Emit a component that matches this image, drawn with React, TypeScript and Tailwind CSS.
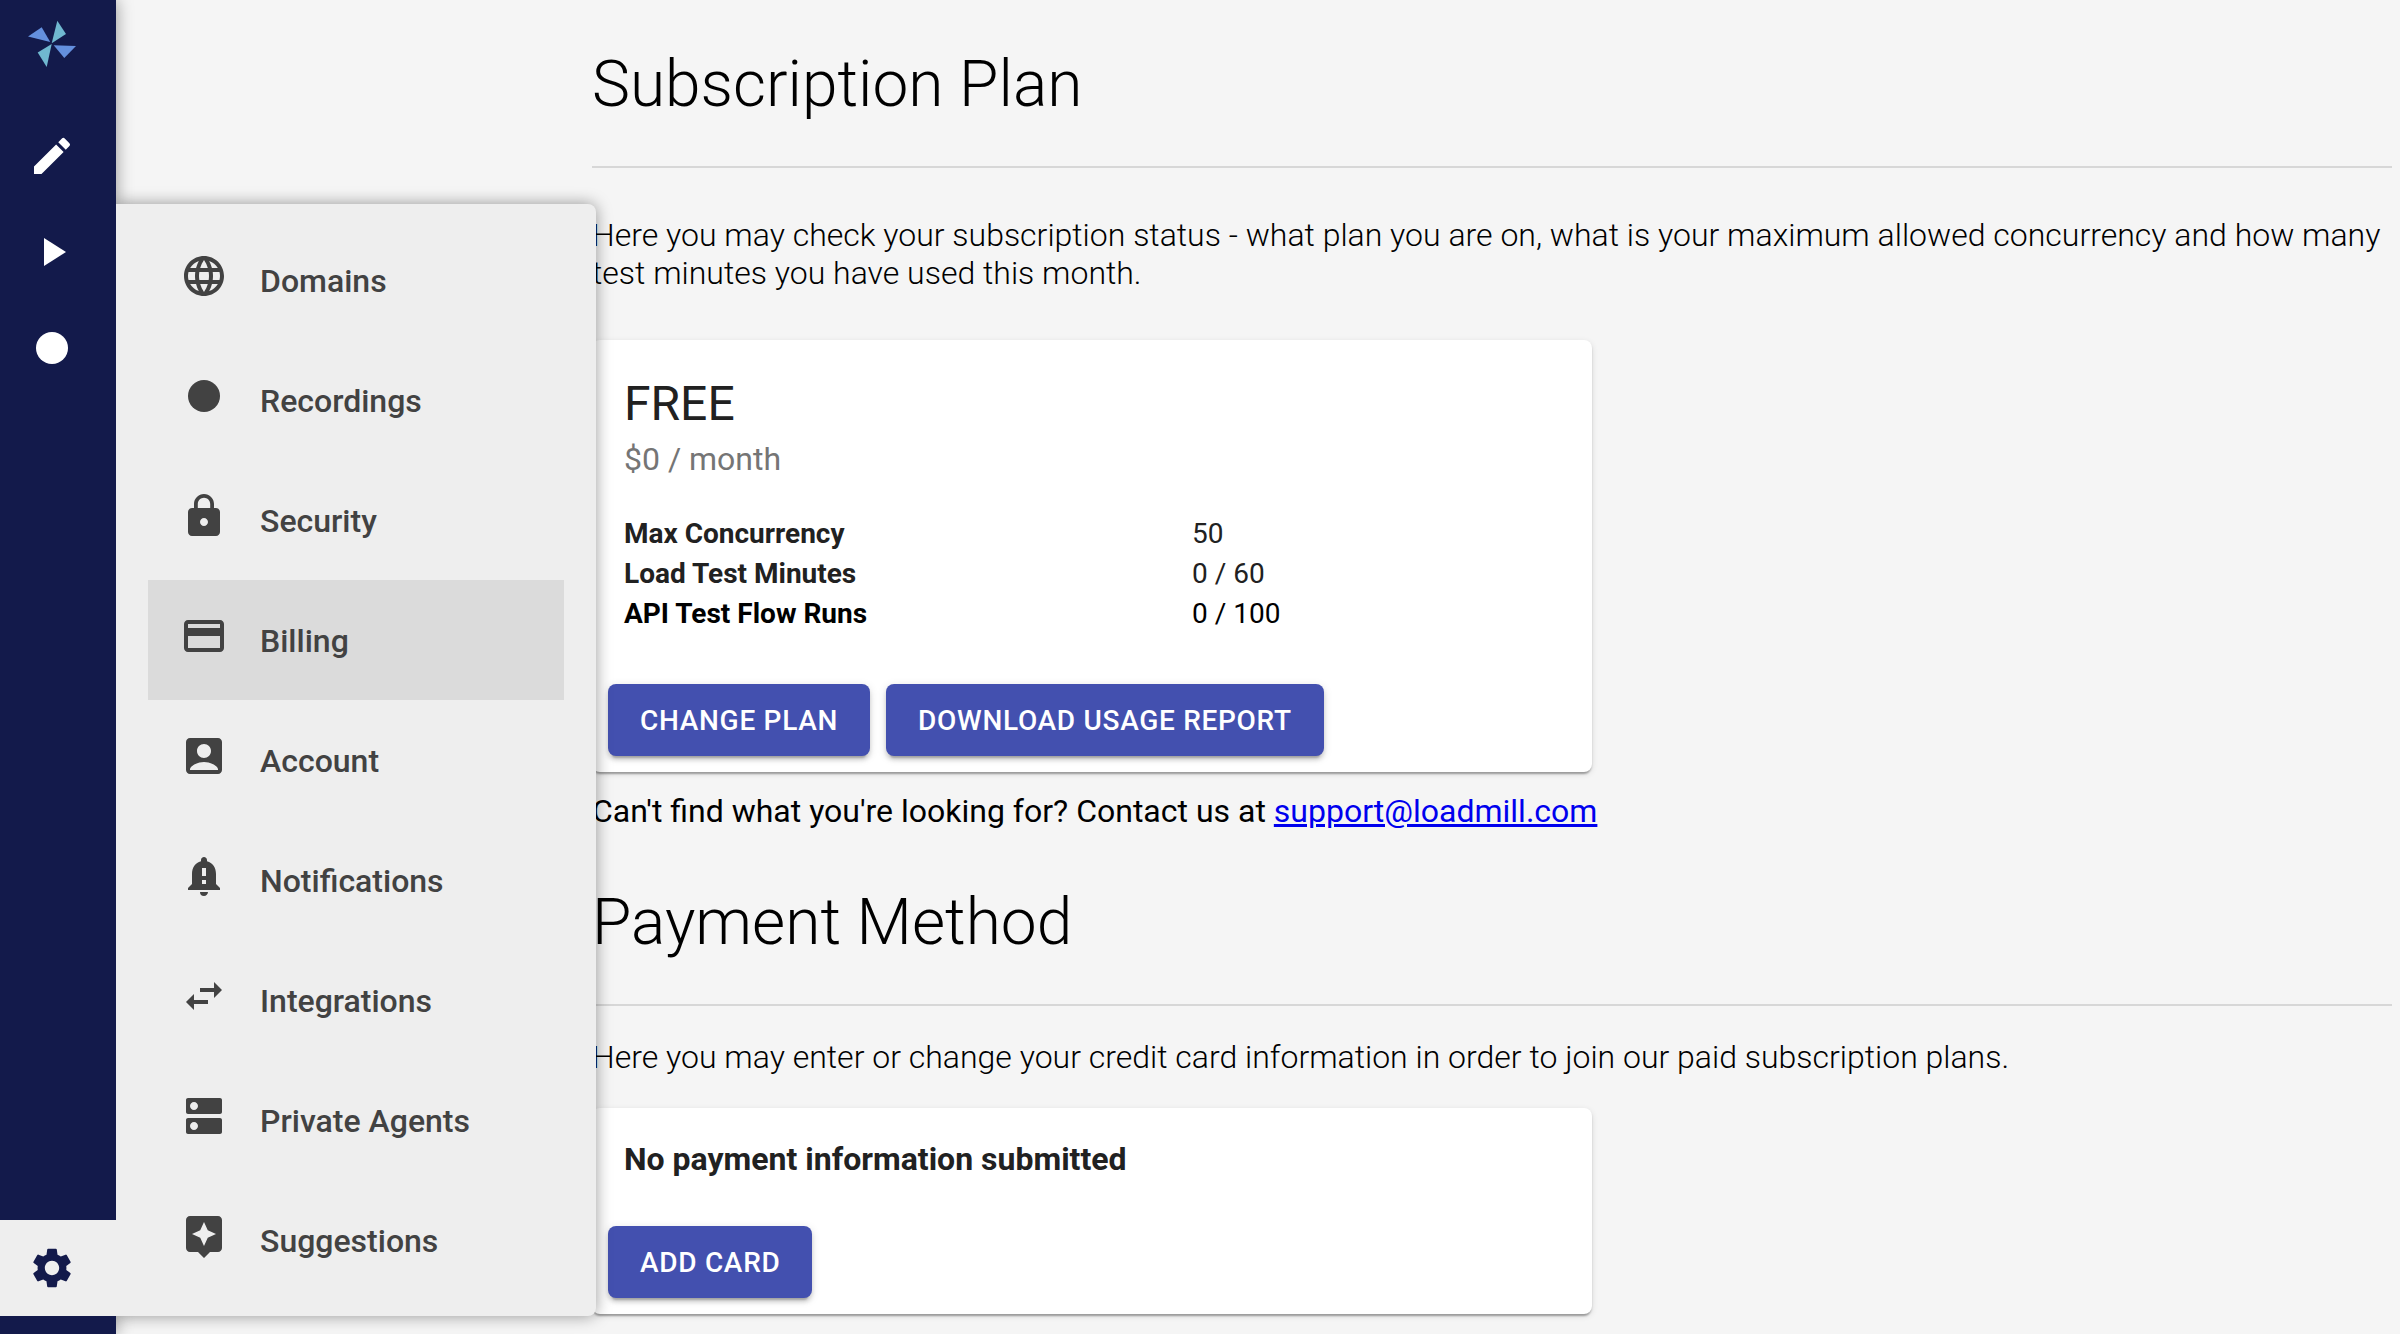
import type { ReactNode } from "react";
import {
  MdAccountBox,
  MdAssistant,
  MdDns,
  MdEdit,
  MdFiberManualRecord,
  MdLanguage,
  MdLock,
  MdNotificationImportant,
  MdPayment,
  MdPlayArrow,
  MdSettings,
  MdSwapHoriz,
} from "react-icons/md";

const menuItems = [
  { label: "Domains", Icon: MdLanguage },
  { label: "Recordings", Icon: MdFiberManualRecord },
  { label: "Security", Icon: MdLock },
  { label: "Billing", Icon: MdPayment, active: true },
  { label: "Account", Icon: MdAccountBox },
  { label: "Notifications", Icon: MdNotificationImportant },
  { label: "Integrations", Icon: MdSwapHoriz },
  { label: "Private Agents", Icon: MdDns },
  { label: "Suggestions", Icon: MdAssistant },
];

const railItems = [
  { label: "Tests", Icon: MdEdit },
  { label: "Runs", Icon: MdPlayArrow },
  { label: "Record", Icon: MdFiberManualRecord },
];

const usage = [
  { label: "Max Concurrency", value: "50", tone: "text-[#212121]" },
  { label: "Load Test Minutes", value: "0 / 60", tone: "text-[#212121]" },
  { label: "API Test Flow Runs", value: "0 / 100", tone: "text-black" },
];

function Logo() {
  return (
    <svg viewBox="0 0 48 48" className="size-12" aria-hidden="true">
      <path d="M29.3 0.7 38 14 23.7 23.2Z" fill="#70b8d0" />
      <path d="M13.7 7.3 0 16.6 22.2 22Z" fill="#6490de" />
      <path d="M23.7 24 9.7 32.4 18.7 47Z" fill="#70b8d0" />
      <path d="M25.7 25.3 48 26 36.3 38Z" fill="#6490de" />
    </svg>
  );
}

function Rail() {
  return (
    <nav
      aria-label="Main"
      className="relative z-10 flex w-[116px] shrink-0 flex-col bg-[#131a4b] pb-[18px] shadow-[0_0_16px_rgba(0,0,0,0.4)]"
    >
      <a href="#home" aria-label="Home" className="flex h-[108px] px-7 pt-5">
        <Logo />
      </a>
      {railItems.map(({ label, Icon }) => (
        <button
          key={label}
          type="button"
          aria-label={label}
          className="flex h-24 items-center px-7 text-white"
        >
          <Icon className="size-12" />
        </button>
      ))}
      <button
        type="button"
        aria-label="Settings"
        className="mt-auto flex h-24 items-center bg-[#eeeeee] px-7 text-[#131a4b]"
      >
        <MdSettings className="size-12" />
      </button>
    </nav>
  );
}

/* The clip keeps the panel's shadow off the rail that it opens from. */
function SettingsMenu() {
  return (
    <nav
      aria-label="Settings"
      className="absolute bottom-[18px] left-[116px] z-20 w-[480px] rounded-r-lg bg-[#eeeeee] px-8 py-4 shadow-[0_0_16px_rgba(0,0,0,0.4)] [clip-path:inset(-24px_-24px_-24px_0)]"
    >
      <ul>
        {menuItems.map(({ label, Icon, active }) => (
          <li key={label}>
            <a
              href="#settings"
              aria-current={active ? "page" : undefined}
              className={
                active
                  ? "flex h-[120px] items-center gap-8 bg-[#dbdbdb] px-8 text-[#424242]"
                  : "flex h-[120px] items-center gap-8 px-8 text-[#424242]"
              }
            >
              <Icon className="mb-2 size-12" />
              <span className="mt-0.5 text-[32px] leading-12 font-medium">{label}</span>
            </a>
          </li>
        ))}
      </ul>
    </nav>
  );
}

function SectionTitle({ children }: { children: ReactNode }) {
  return (
    <>
      <h1 className="mb-[42px] text-[64px] leading-[78px] font-light">{children}</h1>
      <hr className="border-t-2 border-[#d7d7d7]" />
    </>
  );
}

function Card({ children }: { children: ReactNode }) {
  return (
    <div className="w-full max-w-[1000px] rounded-lg bg-white text-[#212121] shadow-[0_4px_2px_-2px_rgba(0,0,0,0.2),0_2px_2px_0_rgba(0,0,0,0.14),0_2px_6px_0_rgba(0,0,0,0.12)]">
      {children}
    </div>
  );
}

function ActionButton({ children }: { children: ReactNode }) {
  return (
    <button
      type="button"
      className="h-[72px] rounded-lg bg-[#4350af] px-8 pt-0.5 text-[28px] font-medium tracking-wide text-white uppercase shadow-[0_6px_2px_-4px_rgba(0,0,0,0.2),0_4px_4px_0_rgba(0,0,0,0.14),0_2px_10px_0_rgba(0,0,0,0.12)]"
    >
      {children}
    </button>
  );
}

export default function App() {
  return (
    <div className="relative flex min-h-screen bg-[#f5f5f5] font-[Roboto,sans-serif] text-black">
      <Rail />
      <SettingsMenu />
      <main className="min-w-0 flex-1 pt-[46px] pr-2 pl-[476px]">
        <section>
          <SectionTitle>Subscription Plan</SectionTitle>
          <p className="my-12 text-[32px] leading-[38px] font-light">
            Here you may check your subscription status - what plan you are on, what is your
            maximum allowed concurrency and how many test minutes you have used this month.
          </p>
          <Card>
            <div className="p-8">
              <h2 className="text-5xl leading-16">FREE</h2>
              <p className="text-[32px] leading-[46px] text-[#757575]">$0 / month</p>
              <table className="mt-8 mb-0.5 w-full table-fixed text-left text-[28px] leading-10">
                <tbody>
                  {usage.map(({ label, value, tone }) => (
                    <tr key={label} className={tone}>
                      <th scope="row" className="w-[568px] p-0 font-bold">
                        {label}
                      </th>
                      <td className="p-0">{value}</td>
                    </tr>
                  ))}
                </tbody>
              </table>
            </div>
            <div className="flex gap-4 p-4">
              <ActionButton>Change plan</ActionButton>
              <ActionButton>Download usage report</ActionButton>
            </div>
          </Card>
          <p className="mt-5 text-[32px] leading-[38px]">
            Can't find what you're looking for? Contact us at{" "}
            <a href="mailto:support@loadmill.com" className="text-[#0000ee] underline">
              support@loadmill.com
            </a>
          </p>
        </section>
        <section className="mt-[54px]">
          <SectionTitle>Payment Method</SectionTitle>
          <p className="my-8 text-[32px] leading-[38px] font-light">
            Here you may enter or change your credit card information in order to join our paid
            subscription plans.
          </p>
          <Card>
            <p className="p-8 text-[32px] leading-[38px] font-bold">
              No payment information submitted
            </p>
            <div className="flex gap-4 p-4">
              <ActionButton>Add card</ActionButton>
            </div>
          </Card>
        </section>
      </main>
    </div>
  );
}
